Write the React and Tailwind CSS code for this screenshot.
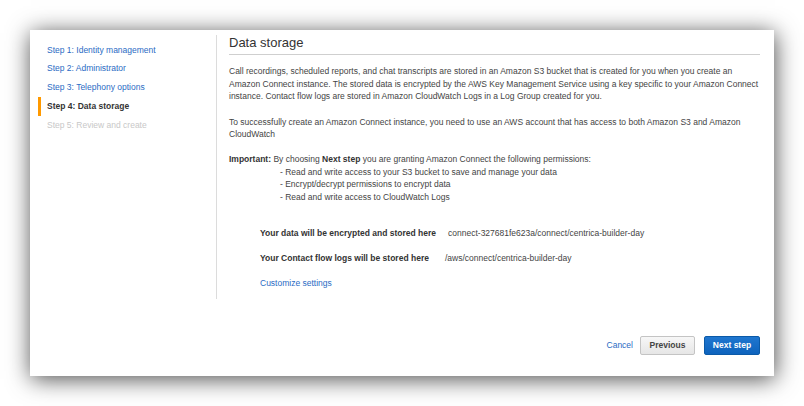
import React from "react";

// Wizard steps shown in the left rail.
const STEPS = [
  { label: "Step 1: Identity management", state: "done" },
  { label: "Step 2: Administrator", state: "done" },
  { label: "Step 3: Telephony options", state: "done" },
  { label: "Step 4: Data storage", state: "active" },
  { label: "Step 5: Review and create", state: "todo" },
];

const PERMISSIONS = [
  "- Read and write access to your S3 bucket to save and manage your data",
  "- Encrypt/decrypt permissions to encrypt data",
  "- Read and write access to CloudWatch Logs",
];

function StepItem({ step }) {
  if (step.state === "active") {
    return (
      <div className="flex h-[18.75px] items-center">
        <span className="ml-[8px] h-full w-[3px] bg-[#ff9900]" />
        <span className="ml-[6px] font-bold text-[#333]">{step.label}</span>
      </div>
    );
  }
  return (
    <div className="flex h-[18.75px] items-center pl-[17px]">
      <span className={step.state === "done" ? "text-[#2a6bc4]" : "text-[#c8c8c8]"}>
        {step.label}
      </span>
    </div>
  );
}

export default function App() {
  return (
    <div className="min-h-screen bg-white pt-[30px] pl-[30px] font-['Liberation_Sans',Arial,sans-serif] text-[8.5px]">
      <div className="flex h-[346px] w-[744px] flex-col bg-white shadow-[1px_3px_22px_rgba(0,0,0,0.7)]">
        {/* ----- sidebar + main column ----- */}
        <div className="mt-[5px] flex">
          <div className="h-[264px] w-[187px] shrink-0 border-r border-[#dcdcdc] pt-[5.6px]">
            {STEPS.map((s) => (
              <StepItem key={s.label} step={s} />
            ))}
          </div>

          <div className="ml-[12px] mr-[14px] flex-1 text-[#444] leading-[12.6px]">
            <h1 className="border-b border-[#cfcfcf] pb-[3px] text-[13px] leading-[16px] text-[#333]">
              Data storage
            </h1>

            <p className="mt-[10px]">
              Call recordings, scheduled reports, and chat transcripts are stored in an Amazon S3 bucket that is
              created for you when you create an Amazon Connect instance. The stored data is encrypted by the AWS
              Key Management Service using a key specific to your Amazon Connect instance. Contact flow logs are
              stored in Amazon CloudWatch Logs in a Log Group created for you.
            </p>

            <p className="mt-[13px]">
              To successfully create an Amazon Connect instance, you need to use an AWS account that has access to
              both Amazon S3 and Amazon CloudWatch
            </p>

            <p className="mt-[12px]">
              <span className="font-bold text-[#333]">Important:</span> By choosing{" "}
              <span className="font-bold text-[#333]">Next step</span> you are granting Amazon Connect the following
              permissions:
            </p>
            <ul className="pl-[51px]">
              {PERMISSIONS.map((p) => (
                <li key={p}>{p}</li>
              ))}
            </ul>

            <div className="mt-[24px] pl-[31px]">
              <div className="flex">
                <span className="font-bold text-[#333]">Your data will be encrypted and stored here</span>
                <span className="ml-[12px]">connect-327681fe623a/connect/centrica-builder-day</span>
              </div>
              <div className="mt-[12.5px] flex">
                <span className="font-bold text-[#333]">Your Contact flow logs will be stored here</span>
                <span className="ml-[16px]">/aws/connect/centrica-builder-day</span>
              </div>
              <div className="mt-[11.5px] text-[#2a6bc4]">Customize settings</div>
            </div>
          </div>
        </div>

        {/* ----- footer actions ----- */}
        <div className="mt-[37px] mr-[14px] flex items-center justify-end">
          <span className="text-[#2a6bc4]">Cancel</span>
          <button className="ml-[7px] h-[19px] w-[55px] rounded-[2px] border border-[#c4c4c4] bg-gradient-to-b from-[#f7f7f7] to-[#e6e6e6] font-bold text-[#444]">
            Previous
          </button>
          <button className="ml-[9px] h-[19px] w-[56px] rounded-[2px] border border-[#0b5aa8] bg-gradient-to-b from-[#1f76cf] to-[#0d63bd] font-bold text-white">
            Next step
          </button>
        </div>
      </div>
    </div>
  );
}
